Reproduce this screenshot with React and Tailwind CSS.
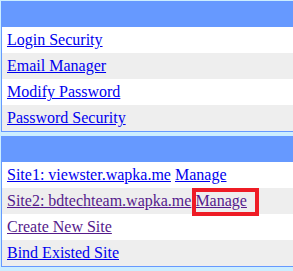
import React from "react";

const accountLinks = [
  { label: "Login Security" },
  { label: "Email Manager" },
  { label: "Modify Password" },
  { label: "Password Security" },
];

const Row = ({ grey, children }) => (
  <div
    className={`h-[26px] px-[5px] flex items-center whitespace-nowrap ${
      grey ? "bg-[#eeeeee]" : "bg-white"
    }`}
  >
    {children}
  </div>
);

const Link = ({ visited, children }) => (
  <a
    href="#"
    className={`underline ${visited ? "text-[#551a8b]" : "text-[#0000ee]"}`}
  >
    {children}
  </a>
);

const Box = ({ children }) => (
  <div className="w-[310px] ml-[1px] border border-[#6699ff] bg-white">
    <div className="h-[25px] bg-[#6699ff]" />
    {children}
  </div>
);

export default function App() {
  return (
    <div
      className="relative min-h-screen overflow-hidden bg-[#cceeff] pt-[1px] text-[16px] leading-[18px]"
      style={{ fontFamily: '"Liberation Serif", "Times New Roman", serif' }}
    >
      <div className="flex flex-col gap-[4px]">
        <Box>
          {accountLinks.map((l, i) => (
            <Row key={l.label} grey={i % 2 === 1}>
              <Link>{l.label}</Link>
            </Row>
          ))}
        </Box>

        <Box>
          <Row>
            <Link>Site1: viewster.wapka.me</Link>
            <span>&nbsp;</span>
            <Link>Manage</Link>
          </Row>
          <Row grey>
            <Link visited>Site2: bdtechteam.wapka.me</Link>
            <span>&nbsp;</span>
            <Link visited>Manage</Link>
          </Row>
          <Row>
            <Link visited>Create New Site</Link>
          </Row>
          <Row grey>
            <Link>Bind Existed Site</Link>
          </Row>
        </Box>
      </div>

      {/* annotation highlight */}
      <div className="absolute left-[192px] top-[188px] w-[67px] h-[28px] border-[4px] border-[#ee1c25]" />
    </div>
  );
}
